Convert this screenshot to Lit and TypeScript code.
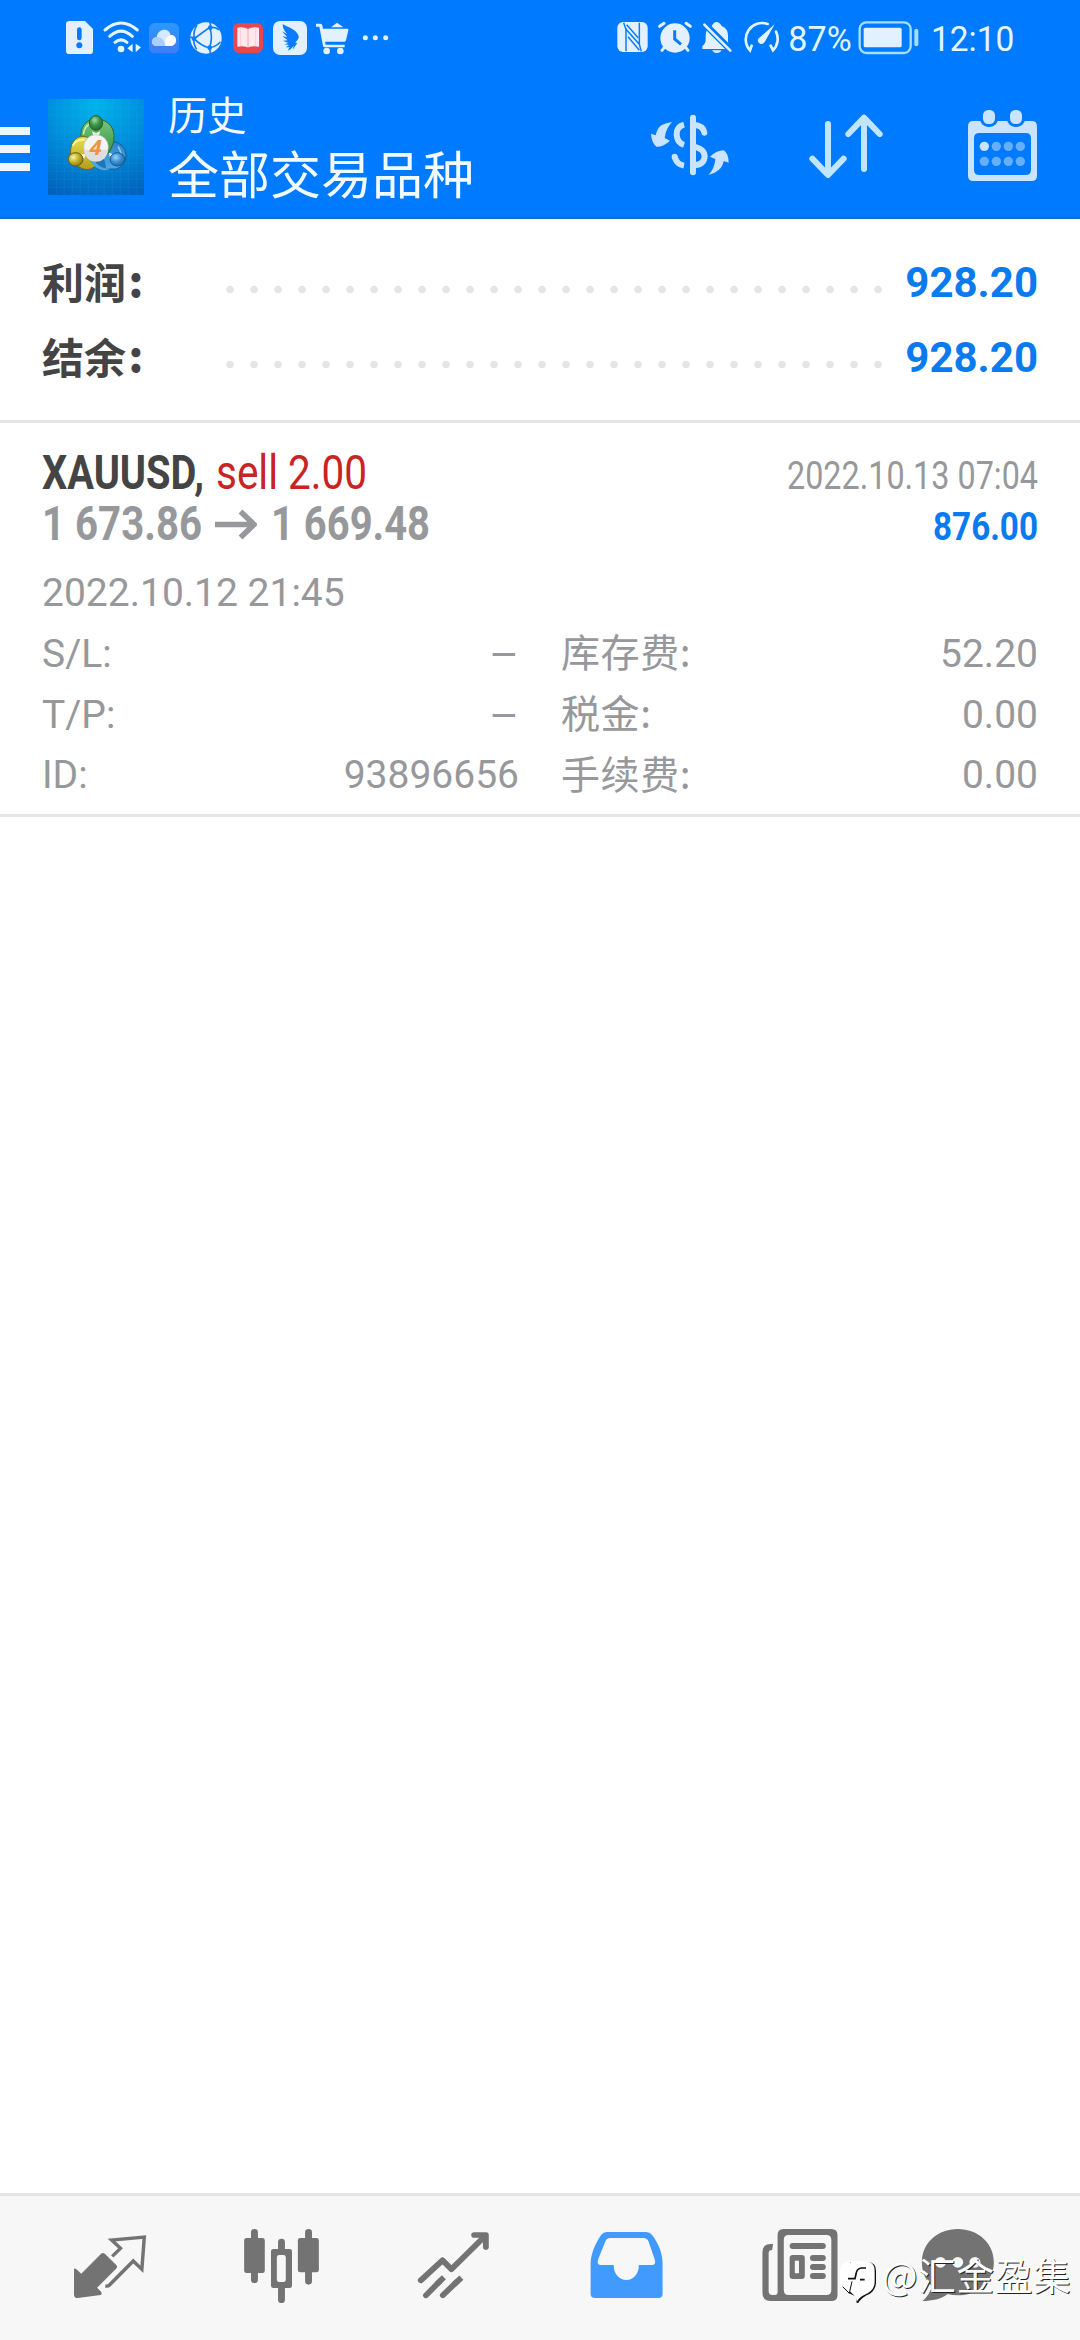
import { LitElement, html, svg, css } from "lit";
import { customElement, property } from "lit/decorators.js";

const statusLeft = [
  { w: 42, box: "30 0 126 180", art: svg`<path fill="#e3f1ff" d="M58 33H105L129 57V122Q129 132 119 132H58Q48 132 48 122V43Q48 33 58 33Z"/><path d="M88 59V84" stroke="#0579ff" stroke-width="14" stroke-linecap="round"/><circle cx="88" cy="106" r="9" fill="#0579ff"/>` },
  { w: 42, box: "156 0 126 180", art: svg`<g fill="none" stroke="#e3f6ff" stroke-width="9" stroke-linecap="round"><path d="M165 60Q213 18 262 60"/><path d="M179 79Q213 48 247 79"/><path d="M195 97Q213 82 231 97"/></g><circle cx="213" cy="117" r="10" fill="#e3f6ff"/><path fill="#e3f6ff" d="M248 101V127L232 115ZM257 101L273 112L257 127Z"/>` },
  { w: 42, box: "282 0 126 180", art: svg`<defs><linearGradient id="cl" x1="0" y1="0" x2="0" y2="1"><stop offset="0" stop-color="#2b98ff"/><stop offset="1" stop-color="#3f7df4"/></linearGradient></defs><rect x="297" y="39" width="90" height="91" rx="17" fill="url(#cl)"/><path fill="#d5e9ff" d="M318 108C300 106 303 82 320 81C325 53 358 54 362 75C382 74 384 105 363 108Z"/><path fill="#fff" d="M345 108C342 92 352 76 364 75C382 75 384 105 363 108Z"/><path fill="#a9cfff" d="M318 108C300 106 303 82 320 81C337 82 344 92 346 108Z"/>` },
  { w: 42, box: "408 0 126 180", art: svg`<circle cx="468" cy="84" r="47" fill="#e3f1ff"/><g fill="none" stroke="#0b7cff" stroke-width="5"><path d="M479 36Q484 48 479 52L432 86L421 80M432 86Q454 108 478 114L482 131M479 52Q490 84 478 114M479 52Q498 50 507 60M478 114Q498 110 511 96M432 86Q430 60 441 46M432 86Q430 104 440 118"/></g><g fill="#0b7cff"><circle cx="432" cy="86" r="7"/><circle cx="481" cy="53" r="7"/><circle cx="479" cy="113" r="7"/></g>` },
  { w: 38, box: "534 0 114 180", art: svg`<rect x="549" y="39" width="90" height="90" rx="17" fill="#e9464f"/><path fill="#ffe9ec" d="M562 53Q580 49 594 57Q608 49 627 53V110Q608 106 596 112H592Q580 106 562 110Z"/><path d="M594 57V112" stroke="#f2a6ae" stroke-width="3"/><path d="M571 52V108M617 52V108" stroke="#ffccd2" stroke-width="3"/>` },
  { w: 45, box: "648 0 135 180", art: svg`<rect x="669" y="33" width="102" height="102" rx="21" fill="#e3f1ff"/><path fill="#0b7cff" d="M698 43C716 52 738 58 745 76C749 86 741 92 736 98L742 99L728 119L731 107L722 118L713 122L719 112L707 112L717 105L703 103L715 99L699 92L713 91L697 78L712 82L696 64L711 72C702 62 698 54 698 43Z"/>` },
  { w: 44, box: "783 0 132 180", art: svg`<path fill="#e3f1ff" d="M798 41H811Q816 41 817 46L819 56H893Q896 57 895 61L888 91Q887 95 883 95H825L827 104H884V112H824Q820 112 819 108L808 50H798Z"/><path fill="#e3f1ff" d="M843 52L861 38L880 52Z"/><circle cx="830" cy="123" r="10" fill="#e3f1ff"/><circle cx="871" cy="123" r="10" fill="#e3f1ff"/>` },
  { w: 40, box: "915 0 120 180", art: svg`<g fill="#e3f1ff"><circle cx="946" cy="83" r="7.5"/><circle cx="976" cy="83" r="7.5"/><circle cx="1007" cy="83" r="7.5"/></g>` },
];

const statusRight = [
  { w: 43, box: "30 0 129 180", art: svg`<rect x="52" y="36" width="91" height="90" rx="17" fill="#e3f1ff"/><path d="M78 124V58L118 103V38" fill="none" stroke="#0b7cff" stroke-width="4.5"/><path d="M71 38L78 58M118 103L124 124M80 44L115 84M84 80L118 121" fill="none" stroke="#0b7cff" stroke-width="4.5"/>` },
  { w: 44, box: "159 0 132 180", art: svg`<circle cx="225" cy="84" r="44" fill="#e3f1ff"/><path d="M224 61V87L243 103" fill="none" stroke="#0b7cff" stroke-width="9"/><path d="M179 49L192 40M258 40L271 49M193 112L186 121M257 112L264 121" stroke="#e3f1ff" stroke-width="9" stroke-linecap="round"/>` },
  { w: 41, box: "291 0 123 180", art: svg`<path fill="#e3f1ff" d="M307 117V108Q317 101 317 89V76Q317 56 335 48Q341 36 350 36Q358 36 365 48Q384 56 384 76V96Q384 106 392 114V117Z"/><path fill="#e3f1ff" d="M337 121H364Q361 129 350 129Q340 129 337 121Z"/><path d="M305 33L397 125" stroke="#007aff" stroke-width="20"/><path d="M313 44L391 122" stroke="#e3f1ff" stroke-width="8" stroke-linecap="round"/>` },
  { w: 50, box: "414 0 150 180", art: svg`<path d="M503 42A49 49 0 0 0 450 121L455 107M528 65A49 49 0 0 1 519 121L512 107" fill="none" stroke="#e3f6ff" stroke-width="8" stroke-linecap="round"/><path fill="#e3f6ff" d="M524 43L494 96Q489 104 480 101Q470 95 475 86Z"/>` },
  { w: 68, box: "564 0 204 180", art: svg`<text x="565" y="124" font-size="106" textLength="190" lengthAdjust="spacingAndGlyphs" fill="#e3f6ff">87%</text>` },
  { w: 72, box: "768 0 216 180", art: svg`<rect x="779" y="37" width="153" height="92" rx="20" fill="none" stroke="#a5deff" stroke-width="7"/><rect x="791" y="53" width="114" height="59" rx="5" fill="#e3f1ff"/><path d="M949 62V103" stroke="#a5deff" stroke-width="12" stroke-linecap="round"/>` },
  { w: 90, box: "984 0 270 180", art: svg`<text x="993" y="124" font-size="106" textLength="250" lengthAdjust="spacingAndGlyphs" fill="#e3f6ff">12:10</text>` },
];

const actions = [
  { w: 140, box: "60 0 420 414", art: svg`<g fill="#cae4ff"><path d="M156 126Q139 128 124 136Q111 146 107 166L93 161Q95 188 109 200Q130 201 150 182L134 174Q137 146 156 126Z"/><path d="M265 285Q282 282 296 270Q307 262 311 243L326 248Q326 221 311 211Q291 211 270 230L286 237Q284 266 265 285Z"/></g><g fill="none" stroke="#cae4ff" stroke-width="18"><path d="M192 134Q169 140 170 164Q171 188 192 195M164 230Q170 253 192 257"/><path stroke-linecap="round" d="M164 230V231M253 158Q250 136 220 134M219 113V277"/><path d="M220 200Q254 206 254 230Q252 254 220 256"/></g>` },
  { w: 150, box: "480 0 450 414", art: svg`<g fill="none" stroke="#c2e5ff" stroke-width="18" stroke-linecap="round" stroke-linejoin="round"><path d="M624 132V284M577 236L624 285L671 236M732 267V115M685 162L732 113L779 162"/></g>` },
  { w: 150, box: "930 0 450 414", art: svg`<path fill="#cae4ff" fill-rule="evenodd" d="M1060 123H1235Q1251 123 1251 139V287Q1251 303 1235 303H1060Q1044 303 1044 287V139Q1044 123 1060 123ZM1078 159Q1062 159 1062 175V269Q1062 285 1078 285H1217Q1233 285 1233 269V175Q1233 159 1217 159Z"/><g fill="#cae4ff" stroke="#007aff" stroke-width="9"><rect x="1084.500" y="85.500" width="45" height="51" rx="20"/><rect x="1165.500" y="85.500" width="45" height="51" rx="20"/></g><g fill="#66afff"><circle cx="1093" cy="199" r="14" fill="#cae4ff"/><circle cx="1129" cy="199" r="14"/><circle cx="1165" cy="199" r="14"/><circle cx="1201" cy="199" r="14"/><circle cx="1093" cy="244" r="14"/><circle cx="1129" cy="244" r="14"/><circle cx="1165" cy="244" r="14"/><circle cx="1201" cy="244" r="14"/></g>` },
];

const tabs = [
  { w: 172, box: "69.7 48 499.500 432", art: svg`<path fill="#737373" d="M215 266Q217 264 221 267L236 281L293 222Q299 216 305 222L337 254Q343 260 337 266L282 323L294 336Q297 343 292 345L226 354Q215 354 215 344Z"/><path fill="none" stroke="#737373" stroke-width="10" d="M326 229L350 205L324 180L419 171L412 268L387 243L318 315Q314 319 306 318"/>` },
  { w: 172, box: "569.2 48 499.500 432", art: svg`<g stroke="#737373" stroke-width="20" stroke-linecap="round"><path d="M739 157V299M896 157V304M817.500 186V210M817.500 320V359"/></g><g fill="#737373"><rect x="709" y="174" width="60" height="105" rx="7"/><rect x="865" y="174" width="61" height="103" rx="7"/><path fill-rule="evenodd" d="M794 207H841Q848 207 848 214V317Q848 324 841 324H794Q787 324 787 317V214Q787 207 794 207ZM811 225Q804 225 804 232V299Q804 306 811 306H823Q830 306 830 299V232Q830 225 823 225Z"/></g>` },
  { w: 172, box: "1068.7 48 499.500 432", art: svg`<g fill="none" stroke="#737373" stroke-width="17"><path stroke-linecap="round" stroke-linejoin="round" d="M1222 301L1285 241L1311 268L1405 172M1377 165H1411V201"/><path stroke-linecap="round" d="M1237 346L1277 304M1286 346L1326 306"/><path d="M1270 311L1289 292M1318 314L1340 293"/></g>` },
  { w: 172, box: "0 48 499.500 432", art: svg`<path fill="#419bff" fill-rule="evenodd" d="M194 156H308Q319 156 325 164C346 193 356 221 356 250V341Q356 354 343 354H160Q147 354 147 341V250C148 221 159 193 178 164Q184 156 194 156ZM205 174Q194 174 190 184L169 238Q164 255 177 255H214C214 284 232 300 251 300C270 300 287 284 287 255H325Q338 255 333 238L315 184Q310 174 300 174Z"/>` },
  { w: 172, box: "499.500 48 499.500 432", art: svg`<path fill="#737373" fill-rule="evenodd" d="M707 147H846Q864 147 864 165V345Q864 363 846 363H670Q646 363 646 338V217Q646 192 670 192H677L674 210Q664 210 664 220V334Q664 345 675 345H682Q690 345 690 336V165Q690 147 707 147ZM722 165Q708 165 708 180V330Q708 345 722 345H832Q846 345 846 330V180Q846 165 832 165Z"/><g fill="#737373"><rect x="725" y="189" width="105" height="18" rx="9"/><rect x="784" y="225" width="46" height="18" rx="9"/><rect x="784" y="252" width="46" height="18" rx="9"/><rect x="784" y="279" width="46" height="18" rx="9"/><path fill-rule="evenodd" d="M734 225H760Q769 225 769 234V288Q769 297 760 297H734Q725 297 725 288V234Q725 225 734 225ZM740 242V280H752V242Z"/></g>` },
  { w: 172, box: "999 48 499.500 432", art: svg`<path fill="#737373" d="M1213 147C1272 147 1318 189 1318 247C1318 303 1272 346 1214 346Q1196 346 1184 342C1166 357 1138 363 1111 363Q1132 345 1138 319C1119 300 1109 276 1109 247C1109 189 1155 147 1213 147Z"/><g fill="#f7f7f7"><circle cx="1163" cy="247" r="16"/><circle cx="1213" cy="247" r="16"/><circle cx="1263" cy="247" r="16"/></g>` },
];

const gridLines = [37, 61, 85, 109, 133, 157, 181, 205, 229, 253, 277];

const appLogo = svg`<defs>
<radialGradient id="bg" cx=".5" cy=".05" r="1"><stop offset="0" stop-color="#00b4ea"/><stop offset=".5" stop-color="#008fdc"/><stop offset="1" stop-color="#0064bd"/></radialGradient>
<linearGradient id="gr" x1="0" y1="0" x2="0" y2="1"><stop offset="0" stop-color="#7cc67b"/><stop offset="1" stop-color="#2e8f3b"/></linearGradient>
<linearGradient id="yl" x1="0" y1="0" x2="0" y2="1"><stop offset="0" stop-color="#e8e052"/><stop offset="1" stop-color="#b59c1c"/></linearGradient>
<linearGradient id="bl" x1="0" y1="0" x2="0" y2="1"><stop offset="0" stop-color="#2f83c8"/><stop offset="1" stop-color="#4aa9e8"/></linearGradient>
<radialGradient id="hg" cx=".4" cy=".3" r=".7"><stop offset="0" stop-color="#a6dba0"/><stop offset=".5" stop-color="#3e9648"/><stop offset="1" stop-color="#226c30"/></radialGradient>
<radialGradient id="hy" cx=".35" cy=".35" r=".7"><stop offset="0" stop-color="#f8f5a0"/><stop offset=".5" stop-color="#c5b42c"/><stop offset="1" stop-color="#8a7a14"/></radialGradient>
<radialGradient id="hb" cx=".4" cy=".35" r=".7"><stop offset="0" stop-color="#9cd4f8"/><stop offset=".5" stop-color="#3d92d4"/><stop offset="1" stop-color="#1d65a8"/></radialGradient></defs>
<rect x="12" y="12" width="288" height="288" fill="url(#bg)"/>
<g stroke="#7fd4ff" stroke-opacity=".1" stroke-width="2">${gridLines.map((p) => svg`<path d="M${p} 12V300M12 ${p}H300"/>`)}</g>
<g stroke-width="3">
<path d="M209 140A41 42 0 0 1 217 222L160 222L150 190L190 172Z" fill="url(#bl)" stroke="#175c94"/>
<path d="M156 176C176 172 184 198 186 220C166 226 150 212 140 190Z" fill="#1f76ba" stroke="none"/>
<path d="M156 72C186 72 209 92 210 122C211 150 196 176 178 186L166 150L112 130C105 96 128 72 156 72Z" fill="url(#gr)" stroke="#2b6a35"/>
<path d="M106 126C122 122 136 127 142 136L134 170L158 206C148 228 116 230 96 208C72 190 74 136 106 126Z" fill="url(#yl)" stroke="#6f6617"/>
<path d="M142 182Q160 222 200 221Q168 236 142 204Q134 194 142 182Z" fill="#4ba6e6" stroke="none"/>
<path d="M86 152Q96 132 122 134" fill="none" stroke="#fff9a8" stroke-width="5"/><path d="M118 118Q122 94 137 88" fill="none" stroke="#c3efba" stroke-width="5"/><path d="M222 154Q235 174 229 188" fill="none" stroke="#91cdf4" stroke-width="5"/>
<path fill="#eef8e8" d="M144 109L156 115L169 109L164 124H148ZM111 178L126 178L120 193ZM195 174L207 177L198 191Z"/>
<ellipse cx="156" cy="84" rx="20" ry="22" fill="url(#hg)" stroke="#245f2d"/>
<ellipse cx="95" cy="193" rx="22" ry="20" fill="url(#hy)" stroke="#6b5f12"/>
<ellipse cx="220" cy="193" rx="22" ry="20" fill="url(#hb)" stroke="#16598f"/></g>
<circle cx="156" cy="156" r="37" fill="#f4f4f4" stroke="#b9b9b9" stroke-width="2"/><path d="M120 164H192A36 36 0 0 1 120 164Z" fill="#dedede"/>
<text x="137" y="179" font-size="66" font-weight="700" font-style="italic" textLength="36" lengthAdjust="spacingAndGlyphs" fill="#f2913e">4</text>`;

@customElement("vector-icon")
class VectorIcon extends LitElement {
  @property({ attribute: false }) icon: any;
  @property({ type: Number }) height = 60;
  static styles = css`
    :host { display: block; flex: none; }
    svg { display: block; font-family: Roboto, sans-serif; }
  `;
  render() {
    const { w, box, art } = this.icon;
    return html`<svg width=${w} height=${this.height} viewBox=${box} preserveAspectRatio="none">${art}</svg>`;
  }
}

/* A single line of text, fitted to a given width. */
@customElement("condensed-text")
class CondensedText extends LitElement {
  @property() text = "";
  @property({ type: Number }) width = 100;
  @property({ type: Number }) size = 48;
  static styles = css`
    :host { display: block; flex: none; }
    svg { display: block; overflow: visible; font-family: Roboto, sans-serif; }
  `;
  render() {
    return html`<svg width=${this.width} height="51"><text y="40" font-size=${this.size} textLength=${this.width} lengthAdjust="spacingAndGlyphs" fill="currentColor">${this.text}</text></svg>`;
  }
}

@customElement("app-root")
class AppRoot extends LitElement {
  static styles = css`
    :host { display: block; }
    .screen { display: flex; flex-direction: column; width: 1080px; height: 2340px; box-sizing: border-box; background: #fff; position: relative; overflow: hidden; font-family: Roboto, "Noto Sans CJK SC", sans-serif; }
    .top { background: #007aff; height: 217px; border-bottom: 2px solid #1a6cc4; }
    .status { display: flex; justify-content: space-between; padding: 10px 0 0 60px; height: 70px; }
    .group { display: flex; }
    .status .right { padding-right: 62px; }
    .bar { display: flex; height: 137px; align-items: flex-start; }
    .burger { display: flex; flex-direction: column; gap: 10px; width: 30px; margin: 47px 18px 0 0; }
    .burger i { height: 8px; background: #ebf6ff; }
    .logo { display: block; width: 96px; height: 96px; margin-top: 19px; font-family: "Noto Sans", sans-serif; }
    .titles { margin: 9px auto 0 24px; color: #f0faff; font-family: "Noto Sans CJK SC", sans-serif; }
    .small { font-size: 39.300px; line-height: 48px; }
    .large { font-size: 51px; line-height: 58px; margin-top: 6px; }
    .summary { padding: 26px 42px 0; height: 175px; border-bottom: 3px solid #e5e5e5; }
    .total { display: flex; height: 75px; line-height: 75px; font-weight: 700; }
    .total .name { width: 176px; font-size: 42px; line-height: 71px; color: #444; font-family: "Noto Sans CJK SC", sans-serif; }
    .total .name b { margin-left: 2.500px; position: relative; top: -2px; }
    .dots { width: 672px; background: radial-gradient(circle at 12px 44.500px, #e5e5e5 3.400px, transparent 4.100px) 0 0 / 24px 75px repeat-x; }
    .total .amount { margin-left: auto; font-size: 42px; color: #0a7aef; }
    .deal { padding: 26px 42px 8px; border-bottom: 3px solid #e5e5e5; color: #97989b; font-size: 39px; }
    .line { display: flex; height: 51px; }
    .symbol { color: #444; font-weight: 700; margin-right: 12px; }
    .side { color: #c92323; }
    .price { font-weight: 700; }
    .arrow { display: block; margin: 0 14px 0 12.500px; }
    .end { margin-left: auto; }
    .gain { color: #0a7aef; font-weight: 700; }
    .opened { margin-top: 12px; line-height: 61px; }
    .details { display: grid; grid-template-columns: 477px 477px; grid-template-rows: 61px 61px 60px; column-gap: 42px; }
    .cell { display: flex; justify-content: space-between; line-height: 61px; }
    .cell:nth-child(n+5) { line-height: 59px; }
    .dash { margin-top: 4px; }
    .details .cjk { font-family: "Noto Sans CJK SC", sans-serif; letter-spacing: .6px; line-height: 53px; }
    .tabs { display: flex; margin-top: auto; padding-left: 24px; height: 144px; background: #f7f7f7; border-top: 3px solid #e5e5e5; }
    .mark { position: absolute; left: 838px; top: 2250px; display: flex; align-items: flex-start; color: #fff; font: 400 37.600px/48px "Noto Sans CJK SC", sans-serif; letter-spacing: .7px; text-shadow: 1px 1px 0 #222; }
    .mark svg { display: block; width: 44px; height: 48px; margin-top: 4px; overflow: visible; }
  `;

  render() {
    const totals = [["利润", "928.20"], ["结余", "928.20"]];
    const cells = [
      ["S/L:", "–", false], ["库存费:", "52.20", true],
      ["T/P:", "–", false], ["税金:", "0.00", true],
      ["ID:", "93896656", false], ["手续费:", "0.00", true],
    ];
    return html`
      <div class="screen">
        <header class="top">
          <div class="status">
            <div class="group">${statusLeft.map((i) => html`<vector-icon .icon=${i}></vector-icon>`)}</div>
            <div class="group right">${statusRight.map((i) => html`<vector-icon .icon=${i}></vector-icon>`)}</div>
          </div>
          <div class="bar">
            <div class="burger"><i></i><i></i><i></i></div>
            <svg class="logo" viewBox="12 12 288 288">${appLogo}</svg>
            <div class="titles"><div class="small">历史</div><div class="large">全部交易品种</div></div>
            <div class="group">${actions.map((i) => html`<vector-icon .icon=${i} height="138"></vector-icon>`)}</div>
          </div>
        </header>
        <section class="summary">
          ${totals.map(([n, v]) => html`<div class="total"><span class="name">${n}<b>:</b></span><span class="dots"></span><span class="amount">${v}</span></div>`)}
        </section>
        <section class="deal">
          <div class="line">
            <condensed-text class="symbol" text="XAUUSD," width="162"></condensed-text>
            <condensed-text class="side" text="sell 2.00" width="151"></condensed-text>
            <condensed-text class="end" text="2022.10.13 07:04" size="39" width="251"></condensed-text>
          </div>
          <div class="line">
            <condensed-text class="price" text="1 673.86" width="160"></condensed-text>
            <svg class="arrow" width="42" height="51"><path d="M0 24.500H38M25.500 11.500L39 24.500L25.500 37.500" fill="none" stroke="#97989b" stroke-width="5.500"/></svg>
            <condensed-text class="price" text="1 669.48" width="159"></condensed-text>
            <condensed-text class="end gain" text="876.00" size="39" width="105"></condensed-text>
          </div>
          <div class="opened">2022.10.12 21:45</div>
          <div class="details">
            ${cells.map(([n, v, cjk]) => html`<div class="cell"><span class=${cjk ? "cjk" : ""}>${n}</span>${v === "–" ? html`<condensed-text class="dash" text="–" size="39" width="30"></condensed-text>` : html`<span>${v}</span>`}</div>`)}
          </div>
        </section>
        <nav class="tabs">${tabs.map((i) => html`<vector-icon .icon=${i} height="144"></vector-icon>`)}</nav>
        <div class="mark">
          <svg viewBox="24 102 132 144"><path fill="#111" d="M60 126H114Q138 128 138 152V188Q136 216 110 226Q92 236 84 250L78 246L82 230L66 224L58 220Z"/><path fill="#fff" d="M62 123H106Q134 125 134 152V186Q134 212 104 224Q86 232 80 246L78 228L62 160Z"/><path fill="#fff" d="M60 123L86 190L78 232L62 216Q30 206 30 182V150Q34 124 60 123Z"/><path fill="none" stroke="#111" stroke-width="5" d="M108 144H94Q80 146 78 162L75 176H54M90 179H104"/><path d="M66 184L58 220L38 200" fill="none" stroke="#111" stroke-width="3"/></svg><span>@汇金盈集</span>
        </div>
      </div>`;
  }
}
